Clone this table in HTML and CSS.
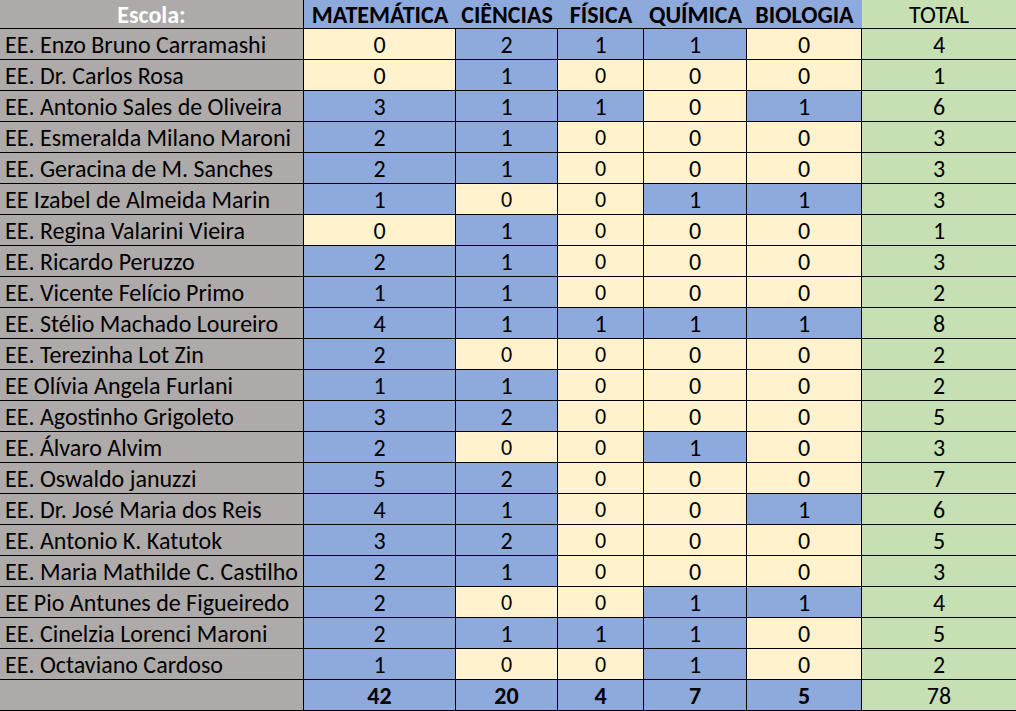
FILE: index.html
```html
<!DOCTYPE html>
<html lang="pt">
<head>
<meta charset="utf-8">
<title>Escolas</title>
<link rel="stylesheet" href="styles.css">
</head>
<body>
<div class="sheet">
  <div class="h hn">Escola:</div><div class="h hb">MATEMÁTICA</div><div class="h hb">CIÊNCIAS</div><div class="h hb">FÍSICA</div><div class="h hb">QUÍMICA</div><div class="h hb">BIOLOGIA</div><div class="h ht">TOTAL</div>

  <div class="c n">EE. Enzo Bruno Carramashi</div><div class="c y">0</div><div class="c b">2</div><div class="c b">1</div><div class="c b">1</div><div class="c y">0</div><div class="c g">4</div>
  <div class="c n">EE. Dr. Carlos Rosa</div><div class="c y">0</div><div class="c b">1</div><div class="c y s">0</div><div class="c y">0</div><div class="c y">0</div><div class="c g">1</div>
  <div class="c n">EE. Antonio Sales de Oliveira</div><div class="c b">3</div><div class="c b">1</div><div class="c b">1</div><div class="c y">0</div><div class="c b">1</div><div class="c g">6</div>
  <div class="c n">EE. Esmeralda Milano Maroni</div><div class="c b">2</div><div class="c b">1</div><div class="c y s">0</div><div class="c y">0</div><div class="c y">0</div><div class="c g">3</div>
  <div class="c n">EE. Geracina de M. Sanches</div><div class="c b">2</div><div class="c b">1</div><div class="c y s">0</div><div class="c y">0</div><div class="c y">0</div><div class="c g">3</div>
  <div class="c n">EE Izabel de Almeida Marin</div><div class="c b">1</div><div class="c y s">0</div><div class="c y s">0</div><div class="c b">1</div><div class="c b">1</div><div class="c g">3</div>
  <div class="c n">EE. Regina Valarini Vieira</div><div class="c y">0</div><div class="c b">1</div><div class="c y s">0</div><div class="c y">0</div><div class="c y">0</div><div class="c g">1</div>
  <div class="c n">EE. Ricardo Peruzzo</div><div class="c b">2</div><div class="c b">1</div><div class="c y s">0</div><div class="c y">0</div><div class="c y">0</div><div class="c g">3</div>
  <div class="c n">EE. Vicente Felício Primo</div><div class="c b">1</div><div class="c b">1</div><div class="c y s">0</div><div class="c y">0</div><div class="c y">0</div><div class="c g">2</div>
  <div class="c n">EE. Stélio Machado Loureiro</div><div class="c b">4</div><div class="c b">1</div><div class="c b">1</div><div class="c b">1</div><div class="c b">1</div><div class="c g">8</div>
  <div class="c n">EE. Terezinha Lot Zin</div><div class="c b">2</div><div class="c y s">0</div><div class="c y s">0</div><div class="c y">0</div><div class="c y">0</div><div class="c g">2</div>
  <div class="c n">EE Olívia Angela Furlani</div><div class="c b">1</div><div class="c b">1</div><div class="c y s">0</div><div class="c y">0</div><div class="c y">0</div><div class="c g">2</div>
  <div class="c n">EE. Agostinho Grigoleto</div><div class="c b">3</div><div class="c b">2</div><div class="c y s">0</div><div class="c y">0</div><div class="c y">0</div><div class="c g">5</div>
  <div class="c n">EE. Álvaro Alvim</div><div class="c b">2</div><div class="c y s">0</div><div class="c y s">0</div><div class="c b">1</div><div class="c y">0</div><div class="c g">3</div>
  <div class="c n">EE. Oswaldo januzzi</div><div class="c b">5</div><div class="c b">2</div><div class="c y s">0</div><div class="c y">0</div><div class="c y">0</div><div class="c g">7</div>
  <div class="c n">EE. Dr. José Maria dos Reis</div><div class="c b">4</div><div class="c b">1</div><div class="c y s">0</div><div class="c y">0</div><div class="c b">1</div><div class="c g">6</div>
  <div class="c n">EE. Antonio K. Katutok</div><div class="c b">3</div><div class="c b">2</div><div class="c y s">0</div><div class="c y">0</div><div class="c y">0</div><div class="c g">5</div>
  <div class="c n">EE. Maria Mathilde C. Castilho</div><div class="c b">2</div><div class="c b">1</div><div class="c y s">0</div><div class="c y">0</div><div class="c y">0</div><div class="c g">3</div>
  <div class="c n">EE Pio Antunes de Figueiredo</div><div class="c b">2</div><div class="c y s">0</div><div class="c y s">0</div><div class="c b">1</div><div class="c b">1</div><div class="c g">4</div>
  <div class="c n">EE. Cinelzia Lorenci Maroni</div><div class="c b">2</div><div class="c b">1</div><div class="c b">1</div><div class="c b">1</div><div class="c y">0</div><div class="c g">5</div>
  <div class="c n">EE. Octaviano Cardoso</div><div class="c b">1</div><div class="c y s">0</div><div class="c y s">0</div><div class="c b">1</div><div class="c y">0</div><div class="c g">2</div>

  <div class="c n"></div><div class="c b t">42</div><div class="c b t">20</div><div class="c b t">4</div><div class="c b t">7</div><div class="c b t">5</div><div class="c g">78</div>
</div>
</body>
</html>
```
FILE: styles.css
```css
html, body {
  margin: 0;
  padding: 0;
  background: #ffffff;
}

.sheet {
  display: grid;
  grid-template-columns: 304px 152px 102px 86px 103px 115px 154px;
  grid-template-rows: 29px repeat(22, 31px);
  width: 1016px;
  font-family: "Carlito", "Lato", "Open Sans", sans-serif;
  font-size: 24px;
  color: #000;
}

.h, .c {
  box-sizing: border-box;
  display: flex;
  align-items: center;
  justify-content: center;
  border-bottom: 1px solid #000;
  line-height: 1;
  white-space: nowrap;
  overflow: hidden;
  padding-top: 2px;
}

.c {
  border-right: 1px solid #000;
}

.h {
  font-weight: bold;
}

.hn {
  background: #aeaaaa;
  color: #ffffff;
  border-right: 1px solid #000;
}

.hb {
  background: #8ea9db;
}

.ht {
  background: #c6e0b4;
  font-weight: normal;
}

.n {
  background: #aeaaaa;
  justify-content: flex-start;
  padding-left: 5px;
}

.b {
  background: #8ea9db;
}

.y {
  background: #fff2cc;
}

.g {
  background: #c6e0b4;
  border-right: none;
}

.s {
  font-size: 22px;
}

.t {
  font-weight: bold;
}
```
